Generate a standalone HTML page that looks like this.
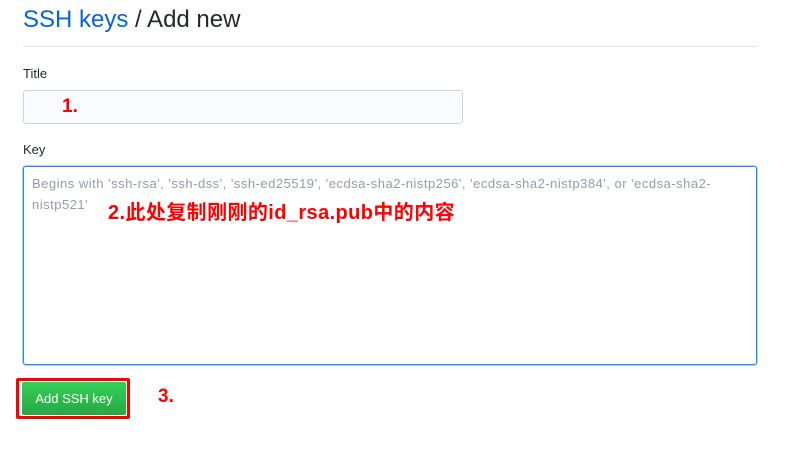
<!DOCTYPE html>
<html><head><meta charset="utf-8"><style>
body{margin:0;width:790px;height:452px;background:#fff;font-family:"Liberation Sans","Noto Sans CJK SC",sans-serif;position:relative;overflow:hidden}
.a{position:absolute}
</style></head><body>
<div class="a" style="left:23px;top:6px;font-size:24px;color:#24292e;white-space:nowrap"><span style="color:#0366d6">SSH keys</span> / Add new</div>
<div class="a" style="left:23px;top:46px;width:735px;height:1px;background:#e1e4e8"></div>
<div class="a" style="left:23px;top:66px;font-size:13px;color:#24292e">Title</div>
<div class="a" style="left:23px;top:90px;width:438px;height:32px;border:1px solid #d1d5da;border-radius:3px;background:#fafbfc"></div>
<div class="a" style="left:62px;top:96px;font-size:19px;font-weight:bold;color:#f00">1.</div>
<div class="a" style="left:23px;top:142px;font-size:13px;color:#24292e">Key</div>
<div class="a" style="left:23px;top:166px;width:732px;height:197px;border:1px solid #2188ff;border-radius:3px;box-shadow:0 0 0 1px rgba(3,102,214,.3)"></div>
<div class="a" style="left:32px;top:173px;width:730px;font-size:13px;line-height:21px;color:#959da5;white-space:nowrap;letter-spacing:0.5px">Begins with 'ssh-rsa', 'ssh-dss', 'ssh-ed25519', 'ecdsa-sha2-nistp256', 'ecdsa-sha2-nistp384', or 'ecdsa-sha2-<br>nistp521'</div>
<div class="a" style="left:108px;top:196px;font-size:20px;font-weight:bold;color:#f00;white-space:nowrap;letter-spacing:0.4px">2.此处复制刚刚的id_rsa.pub中的内容</div>
<div class="a" style="left:16px;top:378px;width:108px;height:35px;border:3px solid #f00;border-radius:2px"></div>
<div class="a" style="left:22px;top:382px;width:104px;height:33px;background:linear-gradient(#34d058,#28a745);border-radius:2px;color:#fff;font-size:13px;line-height:33px;text-align:center">Add SSH key</div>
<div class="a" style="left:158px;top:386px;font-size:19px;font-weight:bold;color:#f00">3.</div>
</body></html>
